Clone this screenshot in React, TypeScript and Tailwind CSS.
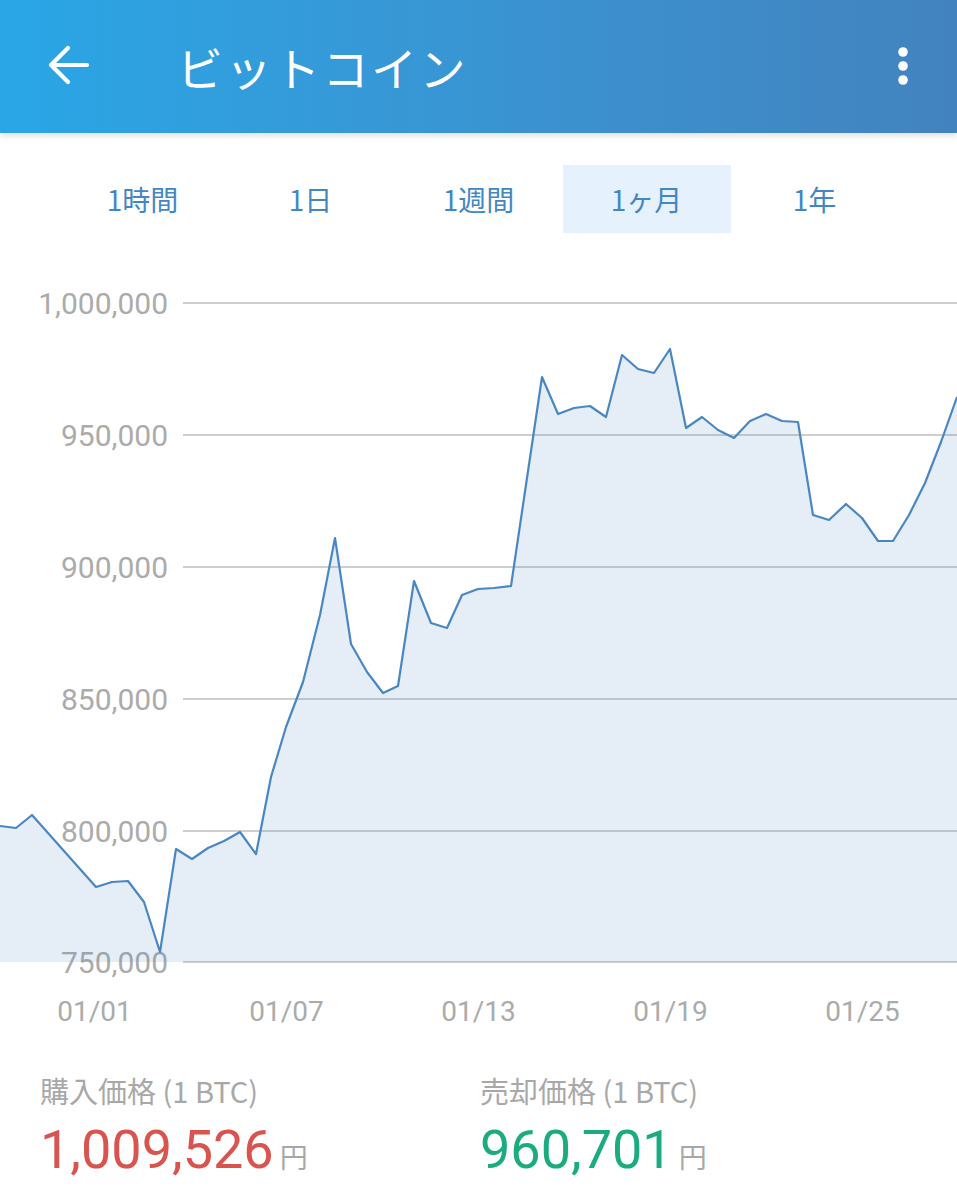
import React from "react";

const CJK = "'Noto Sans CJK JP', 'Noto Sans', sans-serif";
const NUM = "Roboto, 'Noto Sans CJK JP', sans-serif";

const TOP = 260;

const points: [number, number][] = [
  [0, 826], [16, 828], [32, 815], [48, 833], [64, 851], [80, 869], [96, 887],
  [112, 882], [128, 881], [144, 902], [160, 952], [176, 849], [192, 859],
  [208, 848], [224, 841], [240, 832], [256, 854], [271, 777], [286, 727],
  [303, 682], [320, 615], [335, 538], [351, 644], [367, 672], [383, 693],
  [398, 686], [414, 581], [431, 623], [447, 628], [462, 595], [478, 589],
  [494, 588], [511, 586], [527, 478], [542, 377], [558, 414], [574, 408],
  [590, 406], [606, 417], [622, 355], [638, 369], [654, 373], [670, 349],
  [686, 428], [702, 417], [718, 430], [734, 438], [750, 421], [766, 414],
  [782, 421], [798, 422], [813, 515], [829, 520], [846, 504], [862, 518],
  [878, 541], [893, 541], [909, 515], [925, 483], [941, 442], [957, 397],
];

const yLabels = [
  { label: "1,000,000", y: 303 },
  { label: "950,000", y: 435 },
  { label: "900,000", y: 567 },
  { label: "850,000", y: 699 },
  { label: "800,000", y: 831 },
  { label: "750,000", y: 962 },
];

const xLabels = [
  { label: "01/01", x: 94.5 },
  { label: "01/07", x: 286.5 },
  { label: "01/13", x: 478.5 },
  { label: "01/19", x: 670.5 },
  { label: "01/25", x: 862.5 },
];

const tabs = ["1時間", "1日", "1週間", "1ヶ月", "1年"];

function PriceChart() {
  const line = points.map(([x, y]) => `${x},${y - TOP}`).join(" ");
  const base = 962 - TOP;
  const area = `0,${base} ${line} 957,${base}`;

  return (
    <svg width={957} height={780} viewBox="0 0 957 780" className="block">
      {yLabels.map((g) => (
        <line
          key={g.label}
          x1={183}
          x2={957}
          y1={g.y - TOP}
          y2={g.y - TOP}
          stroke="#cfcfcf"
          strokeWidth={2}
        />
      ))}
      {yLabels.map((g) => (
        <text
          key={g.label}
          x={168}
          y={g.y - TOP + 10.5}
          textAnchor="end"
          fontSize={30}
          fill="#ababab"
          style={{ fontFamily: NUM }}
        >
          {g.label}
        </text>
      ))}
      <polygon points={area} fill="rgba(74,134,192,0.14)" />
      <polyline
        points={line}
        fill="none"
        stroke="#4a87c2"
        strokeWidth={2.2}
        strokeLinejoin="round"
      />
      {xLabels.map((l) => (
        <text
          key={l.label}
          x={l.x}
          y={1021 - TOP}
          textAnchor="middle"
          fontSize={28}
          fill="#ababab"
          style={{ fontFamily: NUM }}
        >
          {l.label}
        </text>
      ))}
    </svg>
  );
}

function Price({ label, value, color }: { label: string; value: string; color: string }) {
  return (
    <div className="flex flex-col">
      <div className="text-[29px] leading-[40px] text-[#a8a8a8]" style={{ fontFamily: CJK }}>
        {label}
      </div>
      <div className="mt-[8px] flex items-baseline">
        <span className={`text-[54px] leading-[64px] ${color}`} style={{ fontFamily: NUM }}>
          {value}
        </span>
        <span className="ml-[6px] text-[28px] text-[#a8a8a8]" style={{ fontFamily: CJK }}>
          円
        </span>
      </div>
    </div>
  );
}

export default function App() {
  return (
    <div className="w-[957px] h-[1200px] overflow-hidden bg-white">
      <header className="relative h-[133px] flex items-center bg-gradient-to-r from-[#29a6e6] to-[#4283bf] shadow-[0_3px_6px_rgba(0,0,0,0.12)]">
        <svg width={42} height={40} viewBox="0 0 42 40" className="ml-[48px] -mt-[4px]">
          <path
            d="M3 20 H39 M20 3 L3 20 L20 37"
            fill="none"
            stroke="white"
            strokeWidth={4.2}
            strokeLinecap="round"
            strokeLinejoin="round"
          />
        </svg>
        <h1
          className="ml-[87px] text-[46px] leading-none text-white tracking-[2.5px] -mt-[2px]"
          style={{ fontFamily: CJK }}
        >
          ビットコイン
        </h1>
        <svg width={12} height={40} viewBox="0 0 12 40" className="ml-auto mr-[48px] -mt-[2px]">
          <circle cx={6} cy={6} r={4.8} fill="white" />
          <circle cx={6} cy={20} r={4.8} fill="white" />
          <circle cx={6} cy={34} r={4.8} fill="white" />
        </svg>
      </header>

      <nav className="mt-[32px] flex justify-center">
        {tabs.map((t) => (
          <div
            key={t}
            className={`w-[168px] h-[68px] flex items-center justify-center text-[28px] text-[#4287c4] ${
              t === "1ヶ月" ? "bg-[#e5f1fc]" : ""
            }`}
            style={{ fontFamily: CJK }}
          >
            {t}
          </div>
        ))}
      </nav>

      <div className="mt-[27px]">
        <PriceChart />
      </div>

      <div className="mt-[30px] flex pl-[40px]">
        <div className="w-[440px]">
          <Price label="購入価格 (1 BTC)" value="1,009,526" color="text-[#d9534f]" />
        </div>
        <Price label="売却価格 (1 BTC)" value="960,701" color="text-[#1aab7f]" />
      </div>
    </div>
  );
}
